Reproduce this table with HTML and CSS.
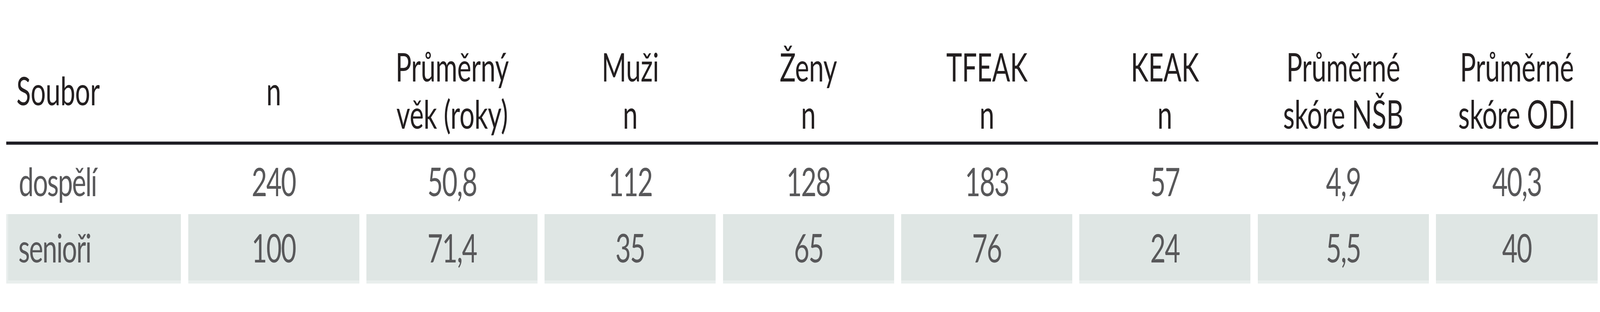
FILE: index.html
```html
<!DOCTYPE html>
<html lang="cs">
<head>
<meta charset="utf-8">
<title>Soubor</title>
<link rel="stylesheet" href="styles.css">
</head>
<body>
<div class="table">
  <div class="row head">
    <div class="cell first"><span class="txt">Soubor</span></div>
    <div class="cell"><span class="txt">n</span></div>
    <div class="cell"><span class="txt">Průměrný<br>věk (roky)</span></div>
    <div class="cell"><span class="txt">Muži<br>n</span></div>
    <div class="cell"><span class="txt">Ženy<br>n</span></div>
    <div class="cell"><span class="txt">TFEAK<br>n</span></div>
    <div class="cell"><span class="txt">KEAK<br>n</span></div>
    <div class="cell"><span class="txt">Průměrné<br>skóre NŠB</span></div>
    <div class="cell"><span class="txt">Průměrné<br>skóre ODI</span></div>
  </div>
  <div class="rule"></div>
  <div class="row body plain">
    <div class="cell first"><span class="txt">dospělí</span></div>
    <div class="cell"><span class="txt">240</span></div>
    <div class="cell"><span class="txt">50,8</span></div>
    <div class="cell"><span class="txt">112</span></div>
    <div class="cell"><span class="txt">128</span></div>
    <div class="cell"><span class="txt">183</span></div>
    <div class="cell"><span class="txt">57</span></div>
    <div class="cell"><span class="txt">4,9</span></div>
    <div class="cell"><span class="txt">40,3</span></div>
  </div>
  <div class="row body shaded">
    <div class="cell first"><span class="txt">senioři</span></div>
    <div class="cell"><span class="txt">100</span></div>
    <div class="cell"><span class="txt">71,4</span></div>
    <div class="cell"><span class="txt">35</span></div>
    <div class="cell"><span class="txt">65</span></div>
    <div class="cell"><span class="txt">76</span></div>
    <div class="cell"><span class="txt">24</span></div>
    <div class="cell"><span class="txt">5,5</span></div>
    <div class="cell"><span class="txt">40</span></div>
  </div>
</div>
<script src="app.js"></script>
</body>
</html>
```

FILE: styles.css
```css
/* Horizontal sizes are given on a 6004px design canvas and multiplied by
   --sx (viewport width / 6004), set from the real viewport width. */
:root {
  --sx: 0.68221;
}

html, body {
  margin: 0;
  padding: 0;
  background: #ffffff;
  overflow: hidden;
}

.table {
  width: calc(var(--sx) * 5972px);
  padding-left: calc(var(--sx) * 24px);
  font-family: "Lato", "Open Sans", sans-serif;
  font-size: 100px;
  line-height: 121px;
}

.row {
  display: grid;
  grid-template-columns:
    calc(var(--sx) * 655px)
    repeat(7, calc(var(--sx) * 642px))
    calc(var(--sx) * 607px);
  column-gap: calc(var(--sx) * 27px);
}

.cell {
  display: flex;
  align-items: center;
  justify-content: center;
  white-space: nowrap;
  min-width: 0;
}

.txt {
  display: inline-block;
  text-align: center;
  transform: scaleX(var(--sx));
  transform-origin: 50% 50%;
}

.first {
  justify-content: flex-start;
}

.first .txt {
  text-align: left;
  transform-origin: 0 50%;
}

.head {
  height: 242px;
  padding-top: 110px;
  padding-bottom: 11px;
  color: #231f20;
  letter-spacing: -0.5px;
}

.head .first {
  padding-left: calc(var(--sx) * 38px);
}

.rule {
  height: 8px;
  background: #1f1e25;
}

.body {
  color: #58585a;
  letter-spacing: -3px;
}

.body .cell {
  height: 170px;
}

.body .first {
  padding-left: calc(var(--sx) * 46px);
}

.plain {
  margin-top: 8px;
}

.shaded .cell {
  background: #dfe6e4;
  border-bottom: 8px solid #e9eeed;
}

.shaded .first {
  border-left: calc(var(--sx) * 8px) solid #e9eeed;
  padding-left: calc(var(--sx) * 38px);
}
```

FILE: app.js
```js
document.documentElement.style.setProperty('--sx', String(window.innerWidth / 6004));
```
